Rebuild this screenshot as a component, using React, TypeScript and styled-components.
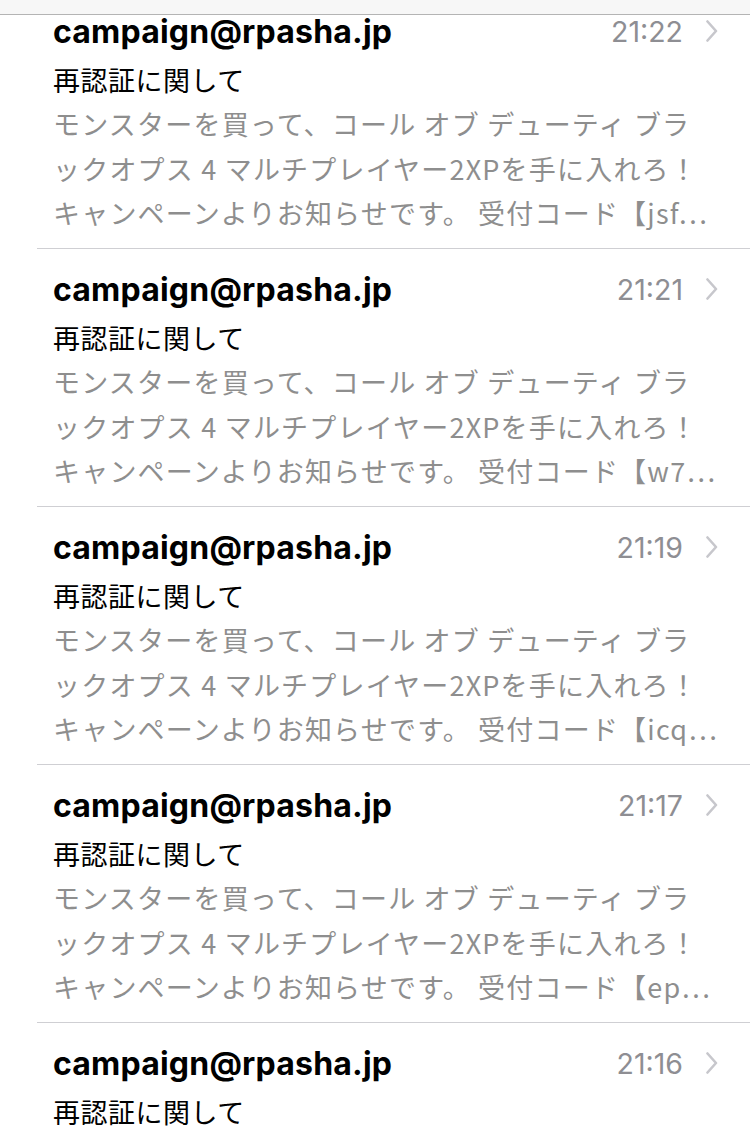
import React from 'react';
import styled, { createGlobalStyle } from 'styled-components';

const GlobalStyle = createGlobalStyle`
  html, body {
    margin: 0;
    padding: 0;
    background: #ffffff;
  }
  body {
    font-family: "Noto Sans CJK JP", "Noto Sans", sans-serif;
    -webkit-font-smoothing: antialiased;
  }
`;

type Mail = {
  time: string;
  code: string;
};

const mails: Mail[] = [
  { time: '21:22', code: 'jsf' },
  { time: '21:21', code: 'w7' },
  { time: '21:19', code: 'icq' },
  { time: '21:17', code: 'ep' },
  { time: '21:16', code: 'xx' },
];

const Screen = styled.div`
  position: relative;
  width: 750px;
  height: 1132px;
  overflow: hidden;
  background: #fff;
`;

const TopBar = styled.div`
  position: absolute;
  top: 0;
  left: 0;
  right: 0;
  height: 14px;
  background: #f7f7f7;
  border-bottom: 1px solid #b4b4b4;
  z-index: 2;
`;

const List = styled.div`
  display: flex;
  flex-direction: column;
  margin-top: -9px;
  padding-left: 37px;
`;

const Row = styled.div`
  height: 258px;
  box-sizing: border-box;
  padding: 20px 32px 0 16px;
  border-bottom: 1.5px solid #cfcfd3;
  display: flex;
  flex-direction: column;
`;

const Head = styled.div`
  display: flex;
  align-items: center;
  justify-content: space-between;
  height: 40px;
`;

const Sender = styled.div`
  font-family: Inter, Roboto, "Liberation Sans", sans-serif;
  font-weight: 700;
  font-size: 32px;
  color: #000;
  letter-spacing: 0.2px;
`;

const Meta = styled.div`
  display: flex;
  align-items: center;
  gap: 23px;
`;

const Time = styled.span`
  font-family: Inter, Roboto, "Liberation Sans", sans-serif;
  font-size: 28.5px;
  color: #8e8e93;
`;

const Chevron = styled.svg`
  width: 12px;
  height: 22px;
  display: block;
`;

const Subject = styled.div`
  margin-top: 7px;
  font-size: 27px;
  line-height: 44px;
  letter-spacing: 0.5px;
  color: #000;
  white-space: nowrap;
`;

const Preview = styled.div`
  font-size: 27px;
  line-height: 44.5px;
  letter-spacing: 1.2px;
  color: #8e8e8e;
`;

const PreviewLine = styled.div`
  white-space: nowrap;
  overflow: hidden;
`;

function MailRow({ mail }: { mail: Mail }) {
  return (
    <Row>
      <Head>
        <Sender>campaign@rpasha.jp</Sender>
        <Meta>
          <Time>{mail.time}</Time>
          <Chevron viewBox="0 0 12 22">
            <path d="M1.5 1.5 L10 11 L1.5 20.5" fill="none" stroke="#c7c7cc" strokeWidth="2.6" strokeLinecap="round" strokeLinejoin="round" />
          </Chevron>
        </Meta>
      </Head>
      <Subject>再認証に関して</Subject>
      <Preview>
        <PreviewLine>モンスターを買って、コール オブ デューティ ブラ</PreviewLine>
        <PreviewLine>ックオプス 4 マルチプレイヤー2XPを手に入れろ！</PreviewLine>
        <PreviewLine>キャンペーンよりお知らせです。 受付コード【{mail.code}…</PreviewLine>
      </Preview>
    </Row>
  );
}

export default function App() {
  return (
    <Screen>
      <GlobalStyle />
      <TopBar />
      <List>
        {mails.map((m) => (
          <MailRow key={m.time} mail={m} />
        ))}
      </List>
    </Screen>
  );
}
